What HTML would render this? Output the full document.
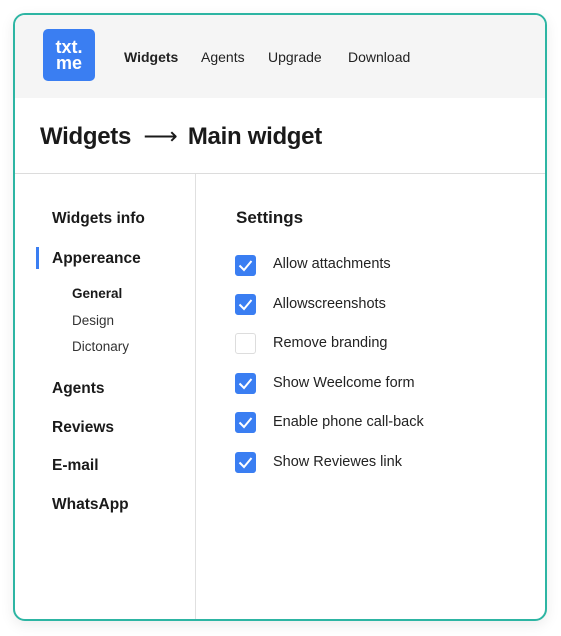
<!DOCTYPE html>
<html><head><style>
*{margin:0;padding:0;box-sizing:border-box}
body{width:561px;height:636px;background:#fff;font-family:"Liberation Sans",sans-serif;color:#1a1a1a;position:relative;overflow:hidden}
.card{position:absolute;left:13px;top:13px;width:534px;height:608px;border:2px solid #2db5a3;border-radius:12px;overflow:hidden;background:#fff;box-shadow:0 4px 14px rgba(0,0,0,.08)}
.hdr{position:absolute;left:0;top:0;right:0;height:83px;background:#f5f5f5}
.logo{position:absolute;left:28px;top:14px;width:52px;height:52px;background:#3a7ef2;border-radius:5px;color:#fff;font-weight:bold;font-size:18px;line-height:16px;text-align:center;padding-top:10px}
.nav{position:absolute;top:34px;font-size:14px;color:#222}
.title{position:absolute;left:25px;top:107px;font-size:24px;font-weight:bold;letter-spacing:-0.3px}
.hl{position:absolute;left:0;right:0;top:158px;height:1px;background:#dcdcdc}
.vl{position:absolute;left:180px;top:159px;bottom:0;width:1px;background:#e0e0e0}
.s{position:absolute;left:37px;font-size:15.5px;font-weight:bold}
.sub{position:absolute;left:57px;font-size:13.5px;color:#333}
.bar{position:absolute;left:21px;top:232px;width:3px;height:22px;background:#3a7ef2}
.cb{position:absolute;left:220px;width:21px;height:21px;border-radius:3px;background:#3a7ef2}
.cb svg{position:absolute;left:3px;top:4px}
.cb.e{background:#fff;border:1.5px solid #ddd}
.lbl{position:absolute;left:258px;font-size:14.5px;color:#222}
</style></head><body>
<div class="card">
<div class="hdr"></div>
<div class="logo">txt.<br>me</div>
<div class="nav" style="left:109px;font-weight:bold">Widgets</div>
<div class="nav" style="left:186px">Agents</div>
<div class="nav" style="left:253px">Upgrade</div>
<div class="nav" style="left:333px">Download</div>
<div class="title">Widgets <span style="font-weight:normal;margin:0 4px 0 6px">⟶</span> Main widget</div>
<div class="hl"></div><div class="vl"></div>
<div class="s" style="top:195px">Widgets info</div>
<div class="bar"></div>
<div class="s" style="top:235px">Appereance</div>
<div class="sub" style="top:271px;font-weight:bold;color:#1a1a1a">General</div>
<div class="sub" style="top:298px">Design</div>
<div class="sub" style="top:324px">Dictonary</div>
<div class="s" style="top:365px">Agents</div>
<div class="s" style="top:404px">Reviews</div>
<div class="s" style="top:442px">E-mail</div>
<div class="s" style="top:481px">WhatsApp</div>
<div class="s" style="left:221px;top:193px;font-size:17px">Settings</div>
<div class="cb" style="top:240px"><svg width="15" height="13"><path d="M1.5 6.5l4.5 4.5 7.5-9" stroke="#fff" stroke-width="2" fill="none"/></svg></div>
<div class="lbl" style="top:241px">Allow attachments</div>
<div class="cb" style="top:279px"><svg width="15" height="13"><path d="M1.5 6.5l4.5 4.5 7.5-9" stroke="#fff" stroke-width="2" fill="none"/></svg></div>
<div class="lbl" style="top:281px">Allowscreenshots</div>
<div class="cb e" style="top:318px"></div>
<div class="lbl" style="top:320px">Remove branding</div>
<div class="cb" style="top:358px"><svg width="15" height="13"><path d="M1.5 6.5l4.5 4.5 7.5-9" stroke="#fff" stroke-width="2" fill="none"/></svg></div>
<div class="lbl" style="top:360px">Show Weelcome form</div>
<div class="cb" style="top:397px"><svg width="15" height="13"><path d="M1.5 6.5l4.5 4.5 7.5-9" stroke="#fff" stroke-width="2" fill="none"/></svg></div>
<div class="lbl" style="top:399px">Enable phone call-back</div>
<div class="cb" style="top:437px"><svg width="15" height="13"><path d="M1.5 6.5l4.5 4.5 7.5-9" stroke="#fff" stroke-width="2" fill="none"/></svg></div>
<div class="lbl" style="top:439px">Show Reviewes link</div>
</div>
</body></html>
